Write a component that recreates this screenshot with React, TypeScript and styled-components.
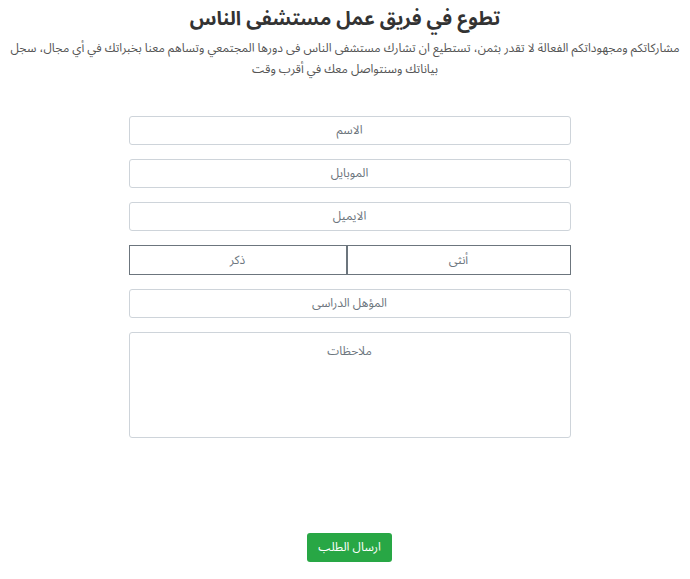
import React from 'react';
import styled, {createGlobalStyle} from 'styled-components';

const GlobalStyle = createGlobalStyle`
  html, body {
    margin: 0;
    padding: 0;
    background: #fff;
  }
  body {
    font-family: "Noto Sans Arabic", "DejaVu Sans", sans-serif;
    color: #333;
  }
`;

const Page = styled.div`
  direction: rtl;
  display: flex;
  flex-direction: column;
  align-items: center;
  padding: 0 6px;
`;

const Title = styled.h1`
  margin: 0 0 1px;
  font-size: 19.5px;
  font-weight: 700;
  line-height: 37px;
  color: #333;
  text-align: center;
`;

const Intro = styled.p`
  margin: 0;
  font-size: 12px;
  line-height: 21px;
  color: #555;
  text-align: center;
`;

const Form = styled.form`
  width: 442px;
  margin: 36px 0 0 9px;
  display: flex;
  flex-direction: column;
  gap: 14px;
`;

const Field = styled.input`
  box-sizing: border-box;
  width: 100%;
  height: 29px;
  border: 1px solid #ced4da;
  border-radius: 3px;
  background: #fff;
  font-family: inherit;
  font-size: 12px;
  color: #495057;
  text-align: center;
  outline: none;
  &::placeholder {
    color: #6c757d;
  }
`;

const Notes = styled.textarea`
  box-sizing: border-box;
  width: 100%;
  height: 106px;
  border: 1px solid #ced4da;
  border-radius: 3px;
  padding: 6px 8px;
  font-family: inherit;
  font-size: 12px;
  text-align: center;
  resize: none;
  outline: none;
  &::placeholder {
    color: #6c757d;
  }
`;

const GenderGroup = styled.div`
  display: grid;
  grid-template-columns: 224px 1fr;
  height: 30px;
`;

const GenderOption = styled.label`
  box-sizing: border-box;
  display: flex;
  align-items: center;
  justify-content: center;
  border: 1px solid #6c757d;
  font-size: 12px;
  color: #6c757d;
  cursor: pointer;
`;

const Actions = styled.div`
  display: flex;
  justify-content: center;
  margin-top: 81px;
`;

const Submit = styled.button`
  height: 29px;
  padding: 0 11px;
  border: none;
  border-radius: 3px;
  background: #28a745;
  color: #fff;
  font-family: inherit;
  font-size: 12px;
  cursor: pointer;
`;

export default function App() {
  return (
    <>
      <GlobalStyle />
      <Page>
        <Title>تطوع في فريق عمل مستشفى الناس</Title>
        <Intro>
          مشاركاتكم ومجهوداتكم الفعالة لا تقدر بثمن، تستطيع ان تشارك مستشفى الناس فى دورها المجتمعي وتساهم معنا بخبراتك في أي مجال، سجل
          بياناتك وسنتواصل معك في أقرب وقت
        </Intro>
        <Form onSubmit={(e) => e.preventDefault()}>
          <Field placeholder="الاسم" />
          <Field placeholder="الموبايل" />
          <Field placeholder="الايميل" />
          <GenderGroup>
            <GenderOption>أنثى</GenderOption>
            <GenderOption>ذكر</GenderOption>
          </GenderGroup>
          <Field placeholder="المؤهل الدراسى" />
          <Notes placeholder="ملاحظات" />
          <Actions>
            <Submit type="submit">ارسال الطلب</Submit>
          </Actions>
        </Form>
      </Page>
    </>
  );
}
